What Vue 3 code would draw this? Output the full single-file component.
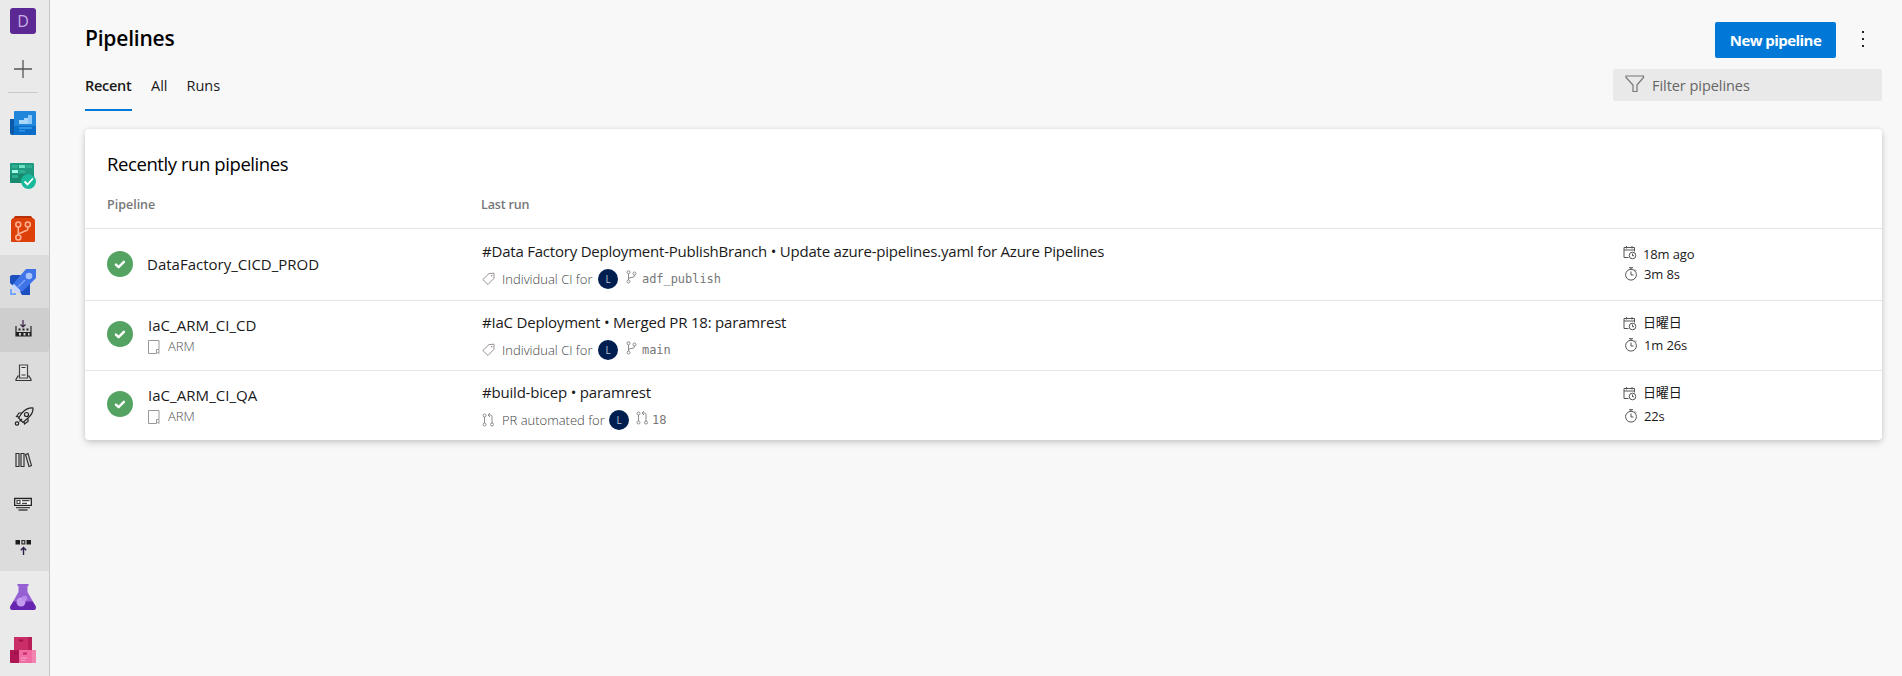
<script setup>
const runs = [
  {
    name: 'DataFactory_CICD_PROD',
    folder: '',
    title: '#Data Factory Deployment-PublishBranch • Update azure-pipelines.yaml for Azure Pipelines',
    reason: 'Individual CI for',
    pr: false,
    branch: 'adf_publish',
    when: '18m ago',
    took: '3m 8s',
    size: 'first',
  },
  {
    name: 'IaC_ARM_CI_CD',
    folder: 'ARM',
    title: '#IaC Deployment • Merged PR 18: paramrest',
    reason: 'Individual CI for',
    pr: false,
    branch: 'main',
    when: '日曜日',
    took: '1m 26s',
    size: 'second',
  },
  {
    name: 'IaC_ARM_CI_QA',
    folder: 'ARM',
    title: '#build-bicep • paramrest',
    reason: 'PR automated for',
    pr: true,
    branch: '18',
    when: '日曜日',
    took: '22s',
    size: 'third',
  },
]
</script>

<template>
  <div class="page">
    <nav class="side">
      <div class="project"><span class="tile">D</span></div>
      <div class="add">
        <svg width="18" height="18" viewBox="0 0 18 18"><path d="M9 0v18M0 9h18" stroke="#555" stroke-width="1.3" /></svg>
      </div>
      <div class="rule"></div>

      <div class="item">
        <svg width="26" height="26" viewBox="0 0 26 26">
          <path d="M0 9h6v16H2a2 2 0 0 1-2-2z" fill="#0a5aa8" />
          <path d="M4 2a1 1 0 0 1 1-1h20a1 1 0 0 1 1 1v22a1 1 0 0 1-1 1H3a2 2 0 0 0 1-2z" fill="#1f86dc" />
          <path d="M4 16h22v8a1 1 0 0 1-1 1H3a2 2 0 0 0 1-2z" fill="#0b6fc9" />
          <path d="M9 14v-4h5V8h4V5h4v9z" fill="#a9d6fb" />
          <path d="M18 5h4v9h-4z" fill="#8cc8fa" />
          <path d="M9 17h13v2H9zM9 20h6v1.500H9z" fill="#2f95e8" />
        </svg>
      </div>
      <div class="item">
        <svg width="26" height="26" viewBox="0 0 26 26">
          <rect width="24" height="20" rx="1" fill="#1f9a80" />
          <path d="M0 11h24v8a1 1 0 0 1-1 1H1a1 1 0 0 1-1-1z" fill="#188a70" />
          <path d="M2 2h5.500v3H2zM16 2h6v3h-6zM9 7h6v3H9zM2 12h6v3H2z" fill="#2fae90" />
          <path d="M9 2h6v3H9z" fill="#6fe3c4" /><path d="M2 7h6v3H2z" fill="#a5fbe4" />
          <circle cx="18.500" cy="18.500" r="7.500" fill="#1ab99b" />
          <path d="M14.500 18.500l3 3 5.500-6" fill="none" stroke="#fff" stroke-width="1.800" />
        </svg>
      </div>
      <div class="item">
        <svg width="26" height="26" viewBox="0 0 26 26">
          <path d="M5 0h16l2 3H3z" fill="#b83004" />
          <path d="M3 2h20l2 2v21a1 1 0 0 1-1 1H2a1 1 0 0 1-1-1V4z" fill="#de4009" />
          <g fill="none" stroke="#ffb294" stroke-width="1.500">
            <circle cx="8.300" cy="8.500" r="2.500" /><circle cx="17.800" cy="8.500" r="2.500" /><circle cx="8.300" cy="21.500" r="2.500" />
            <path d="M8.300 11v8M17.800 11v2q0 1-1.400 1.500L8.300 18" />
          </g>
        </svg>
      </div>

      <div class="group">
        <div class="item">
          <svg width="26" height="26" viewBox="0 0 26 26">
            <path d="M0 7l2-1h9L3 17l-3-3zM20 14v12h-8l-3-5z" fill="#1c4fc0" />
            <path d="M16 0h10v9L12 23l-9-8z" fill="#3f73e8" />
            <circle cx="19" cy="7" r="3.300" fill="#a9c3fb" />
            <path d="M8 18l7-7" stroke="#7da3f5" stroke-width="1.500" />
            <path d="M1 17l3-2 7 7-3 2-2-2-1 1z" fill="#c5d6fd" />
            <path d="M0 20h2v4h4v2H0z" fill="#78a4fa" />
          </svg>
        </div>
        <div class="sub on">
          <svg width="17" height="18" viewBox="0 0 17 18">
            <path d="M8 1v7M5.500 5.500L8 8l2.500-2.500" fill="none" stroke="#382048" stroke-width="1.200" />
            <path d="M1 7v10h15V7" fill="none" stroke="#222" stroke-width="1.200" />
            <path d="M3.500 9.500h2v2h-2zM7.500 9.500h2v2h-2zM11.500 9.500h2v2h-2zM1 13h15v1H1zM1 14h3v3H1zM6 14h2.500v3H6zM10.500 14H13v3h-2.500zM14.500 14H16v3h-1.500z" fill="#222" />
          </svg>
        </div>
        <div class="sub">
          <svg width="17" height="18" viewBox="0 0 17 18">
            <path d="M4.500 1h8v13h-8z" fill="#e6e6e6" stroke="#444" stroke-width="1.200" />
            <path d="M4.500 12H3l-2 3.500v1h15v-1L14 12h-1.500M1 16.500h15M6.500 3.500h4M6.500 11h4" fill="none" stroke="#333" stroke-width="1.200" />
          </svg>
        </div>
        <div class="sub">
          <svg class="rocket" width="20" height="19" viewBox="0 0 20 19">
            <g fill="none" stroke="#222" stroke-width="1.200">
              <path d="M19 1c-5-.3-8 1.500-11 5l-3.500 5L9 15.500 14 11c3.500-3 5.200-6 5-10z" />
              <circle cx="12.500" cy="7.500" r="2" /><path d="M8 6H5L2.500 9.500l3 .5M14 11.500v3L10.500 17 10 14.500M5.500 14.500L8 12" />
              <circle cx="3" cy="16.500" r="1.700" />
            </g>
          </svg>
        </div>
        <div class="sub">
          <svg width="17" height="16" viewBox="0 0 17 16">
            <path d="M1 1.500h3v13H1zM6 1.500h3v13H6zM10.500 2.500l2.500-.9 3.500 12-2.500.9z" fill="none" stroke="#333" stroke-width="1.200" />
          </svg>
        </div>
        <div class="sub">
          <svg class="task" width="18" height="14" viewBox="0 0 18 14">
            <path d="M.7 1.500h16.600v6.800H.7z" fill="#fff" stroke="#222" stroke-width="1.300" />
            <path d="M3 3.500h3v3H3zM8 3.700h7.500M8 6.300h5" fill="none" stroke="#444" stroke-width="1.200" />
            <path d="M2 10.600h14M4.500 13h9" stroke="#444" stroke-width="1.300" />
          </svg>
        </div>
        <div class="sub">
          <svg width="17" height="17" viewBox="0 0 17 17">
            <path d="M.5 1H5v4.500H.5zM11.500 1H16v4.500h-4.500z" fill="#1c1c1c" />
            <path d="M6.900 1.600h2.900v3.300H6.900z" fill="#ddd" stroke="#333" stroke-width="1.200" />
            <path d="M8.500 16V8.500M5.800 11.200l2.700-2.700 2.700 2.700" fill="none" stroke="#2d1c48" stroke-width="1.400" />
          </svg>
        </div>
      </div>

      <div class="item">
        <svg width="26" height="26" viewBox="0 0 26 26">
          <path d="M7.500 0h11v2h-1v6l8 14q1.200 4-2 4h-21q-3.200 0-2-4l8-14V2h-1z" fill="#9560d2" />
          <path d="M3.500 17.500h19l3 4.500q1.200 4-2 4h-21q-3.200 0-2-4z" fill="#6726b0" />
          <circle cx="11" cy="18" r="4.500" fill="#c29aef" /><circle cx="14.500" cy="14.500" r="2.700" fill="#b98ae9" />
        </svg>
      </div>
      <div class="item">
        <svg width="26" height="26" viewBox="0 0 26 26">
          <path d="M4 0h18v13H4z" fill="#cb2d68" /><path d="M18 0h4v13h-4z" fill="#b81e58" />
          <path d="M0 13h9v13H1a1 1 0 0 1-1-1z" fill="#ad1553" /><path d="M9 13h17v12a1 1 0 0 1-1 1H9z" fill="#ef6ba2" />
          <path d="M22 13h4v13h-4z" fill="#f283b1" />
          <path d="M9 2.500h4v2H9zM4 15.500h4v2H4z" fill="#a01048" /><path d="M13 15.500h4v2h-4z" fill="#c52562" />
          <path d="M11 21h6M11 23.500h4" stroke="#f8a5c8" stroke-width="1" />
        </svg>
      </div>
    </nav>

    <main>
      <header class="top">
        <h1>Pipelines</h1>
        <button class="new"><span>New pipeline</span></button>
        <svg class="more" width="4" height="18" viewBox="0 0 4 18"><path d="M1 1h2v2H1zM1 8h2v2H1zM1 15h2v2H1z" fill="#222" /></svg>
      </header>
      <div class="bar">
        <div class="tabs">
          <span class="tab active">Recent</span><span class="tab all">All</span><span class="tab">Runs</span>
        </div>
        <div class="filter">
          <svg width="20" height="18" viewBox="0 0 20 18"><path d="M1 1h17.500v1.500L12 10v6.500H8V10L1 2.500z" fill="none" stroke="#777" stroke-width="1.200" /></svg>
          <span>Filter pipelines</span>
        </div>
      </div>

      <section class="card">
        <h2>Recently run pipelines</h2>
        <div class="cols head"><span>Pipeline</span><span>Last run</span></div>
        <div v-for="run in runs" :key="run.name" class="cols row" :class="run.size">
          <div class="pipe">
            <svg class="ok" width="26" height="26" viewBox="0 0 26 26">
              <circle cx="13" cy="13" r="13" fill="#55a362" />
              <path d="M8.900 13.600l2.700 2.600 5.300-5.400" fill="none" stroke="#fff" stroke-width="2.400" stroke-linecap="round" stroke-linejoin="round" />
            </svg>
            <div class="names">
              <div class="name">{{ run.name }}</div>
              <div v-if="run.folder" class="folder">
                <svg width="12" height="14" viewBox="0 0 12 14"><path d="M8 13.500H.5V.5h10.500V9M8.500 9.500v4l1.200-1 1.300 1v-4z" fill="none" stroke="#999" /></svg>
                <span>{{ run.folder }}</span>
              </div>
            </div>
          </div>
          <div class="last">
            <div class="title">{{ run.title }}</div>
            <div class="meta">
              <svg v-if="run.pr" class="kind" width="13" height="14" viewBox="0 0 13 14">
                <g fill="none" stroke="#8b8b8b"><circle cx="2.500" cy="2.500" r="1.500" /><circle cx="2.500" cy="11.500" r="1.500" /><circle cx="10" cy="11.500" r="1.500" /><path d="M2.500 4v6M10 10V3.500Q10 2 8.500 2H6M8 0L6 2l2 2" /></g>
              </svg>
              <svg v-else class="kind" width="13" height="14" viewBox="0 0 13 14">
                <path d="M.8 7.500L7 1.600l5-.4v5L6 12.500z" fill="none" stroke="#9a8f8f" /><circle cx="9.700" cy="3.700" r=".8" fill="#888" />
              </svg>
              <span class="reason" :class="{ auto: run.pr }">{{ run.reason }}</span>
              <span class="who">L</span>
              <svg v-if="run.pr" class="ref wide" width="13" height="14" viewBox="0 0 13 14">
                <g fill="none" stroke="#8b8b8b"><circle cx="2.500" cy="2.500" r="1.500" /><circle cx="2.500" cy="11.500" r="1.500" /><circle cx="10" cy="11.500" r="1.500" /><path d="M2.500 4v6M10 10V3.500Q10 2 8.500 2H6M8 0L6 2l2 2" /></g>
              </svg>
              <svg v-else class="ref" width="11" height="14" viewBox="0 0 11 14">
                <g fill="none" stroke="#8b8b8b"><circle cx="2.500" cy="2.200" r="1.500" /><circle cx="8.500" cy="3.500" r="1.500" /><circle cx="2.500" cy="11.500" r="1.500" /><path d="M2.500 4v6M8.500 5q0 2.500-2.500 2.500H5Q2.500 7.500 2.500 9.500" /></g>
              </svg>
              <span class="branch">{{ run.branch }}</span>
            </div>
          </div>
          <div class="times">
            <div class="time when">
              <svg width="14" height="14" viewBox="0 0 14 14">
                <g fill="none" stroke="#555"><path d="M5.500 11.500H1v-10h10.500v4M1 4h10.500M3.500 0v2.500M9 0v2.500" /><circle cx="9.500" cy="9.500" r="3.300" /><path d="M9.500 7.500v2.200H11" /></g>
              </svg>
              <span>{{ run.when }}</span>
            </div>
            <div class="time took">
              <svg width="14" height="14" viewBox="0 0 14 14">
                <g fill="none" stroke="#555"><circle cx="7" cy="7.700" r="5.400" /><path d="M5 .7h4M7 .7v1.600M7 4.500v3.500h2.500M11 2.500l1.200 1.200" /></g>
              </svg>
              <span>{{ run.took }}</span>
            </div>
          </div>
        </div>
      </section>
    </main>
  </div>
</template>

<style>
body { margin: 0; background: #f8f8f8; }
</style>

<style scoped>
.page { display: flex; height: 676px; overflow: hidden; background: #f8f8f8; color: #1a1a1a; font-family: "Open Sans", "Noto Sans CJK JP", sans-serif; white-space: nowrap; }
svg { display: block; flex: none; }
.side { width: 49px; height: 676px; flex: none; background: #eaeaea; border-right: 1px solid #c8c8c8; }
.project { height: 42px; padding: 8px 0 0 10px; box-sizing: border-box; }
.tile { display: block; width: 26px; height: 26px; border-radius: 3px; background: #5c2893; color: #c8aee2; font-size: 16px; line-height: 26px; text-align: center; font-weight: 500; }
.add { height: 50px; padding: 18px 0 0 14px; box-sizing: border-box; }
.rule { width: 30px; height: 1px; margin: 0 0 3px 8px; background: #cacaca; }
.item { height: 53px; display: flex; align-items: center; padding-left: 10px; }
.group { background: #dcdcdc; }
.sub { height: 43.800px; display: flex; align-items: center; padding: 0 0 2px 14.500px; box-sizing: border-box; }
.sub.on { background: #cecece; border-radius: 0 3px 3px 0; padding-bottom: 3px; }
.sub .rocket, .sub .task { margin-left: -1px; }

main { flex: 1; padding: 0 20px 0 35px; min-width: 0; }
.top { display: flex; align-items: flex-start; height: 69px; padding-top: 22px; box-sizing: border-box; }
h1 { flex: 1; margin: 0; font-size: 21px; line-height: 32px; font-weight: 600; letter-spacing: -0.200px; color: #000; }
.new { width: 121px; height: 36px; border: 0; border-radius: 2px; padding: 0; background: #0078d7; color: #fff; font: 700 15px/36px "Open Sans", sans-serif; letter-spacing: -0.550px; }
.more { margin: 8px 17px 0 25px; }
.bar { display: flex; justify-content: space-between; height: 60px; }
.tabs { display: flex; gap: 19px; height: 42px; }
.tab { font-size: 14.500px; line-height: 33px; box-sizing: border-box; height: 42px; }
.active { font-weight: 600; border-bottom: 2px solid #0078d7; width: 47px; letter-spacing: -0.300px; }
.filter { width: 269px; height: 32px; box-sizing: border-box; padding-left: 12px; display: flex; align-items: center; gap: 7px; background: #e9e9e9; border-radius: 2px; font-size: 14.500px; letter-spacing: -0.050px; color: #666; }
.filter svg { margin-top: -2px; }

.card { height: 311px; background: #fff; border-radius: 4px; box-shadow: 0 3px 7px rgba(0, 0, 0, .16), 0 0 4px rgba(0, 0, 0, .08); }
h2 { margin: 0; padding: 19px 0 0 22px; font-size: 18.500px; line-height: 32px; font-weight: 400; color: #000; letter-spacing: -0.420px; }
.cols { display: grid; grid-template-columns: 374px 1142px 1fr; padding-left: 22px; }
.head { height: 48px; font-size: 12.500px; line-height: 50px; font-weight: 600; color: #777; }
.head span + span { letter-spacing: -0.150px; }
.row { height: 69px; border-top: 1px solid #e6e6e6; }
.row.first { height: 71px; }
.pipe { display: flex; }
.ok { margin-top: 20px; }
.first .ok { margin-top: 22px; }
.names { margin: 14px 0 0 15px; }
.first .names { margin: 25px 0 0 14px; }
.name { font-size: 15px; line-height: 20px; font-weight: 500; letter-spacing: 0.050px; }
.first .name { letter-spacing: 0; }
.folder { display: flex; align-items: center; gap: 8px; margin-top: 1px; font-size: 13px; line-height: 21px; font-weight: 300; color: #555; }
.last { padding: 11px 0 0 1px; }
.first .last { padding-top: 12px; }
.title { font-size: 15px; line-height: 20px; letter-spacing: -0.200px; }
.first .title { letter-spacing: -0.215px; }
.meta { display: flex; align-items: center; height: 20px; margin-top: 8px; font-size: 13px; line-height: 20px; color: #777; }
.reason { width: 92px; margin-left: 7px; font-weight: 300; color: #444; }
.reason.auto { width: 103px; }
.who { width: 20px; height: 20px; margin-left: 4px; border-radius: 50%; background: #001e50; color: #b9c3d6; font-size: 10px; text-align: center; }
.ref { margin: -4px 5px 0 8px; }
.ref.wide { margin: -4px 3px 0 7px; }
.branch { font: 12px/20px "DejaVu Sans Mono", monospace; letter-spacing: -0.050px; }
.times { padding-top: 11px; font-size: 13px; line-height: 20px; letter-spacing: -0.150px; }
.first .times { padding-top: 15px; }
.time { display: flex; gap: 6px; }
.time svg { margin-top: 5px; }
.first .when svg { margin-top: 2px; }
.took { gap: 6px; padding-left: 1px; margin-top: 3px; }
.took svg { margin-top: 3px; }
.first .took { margin-top: 0; }
.third .took { margin-top: 4px; }
</style>
